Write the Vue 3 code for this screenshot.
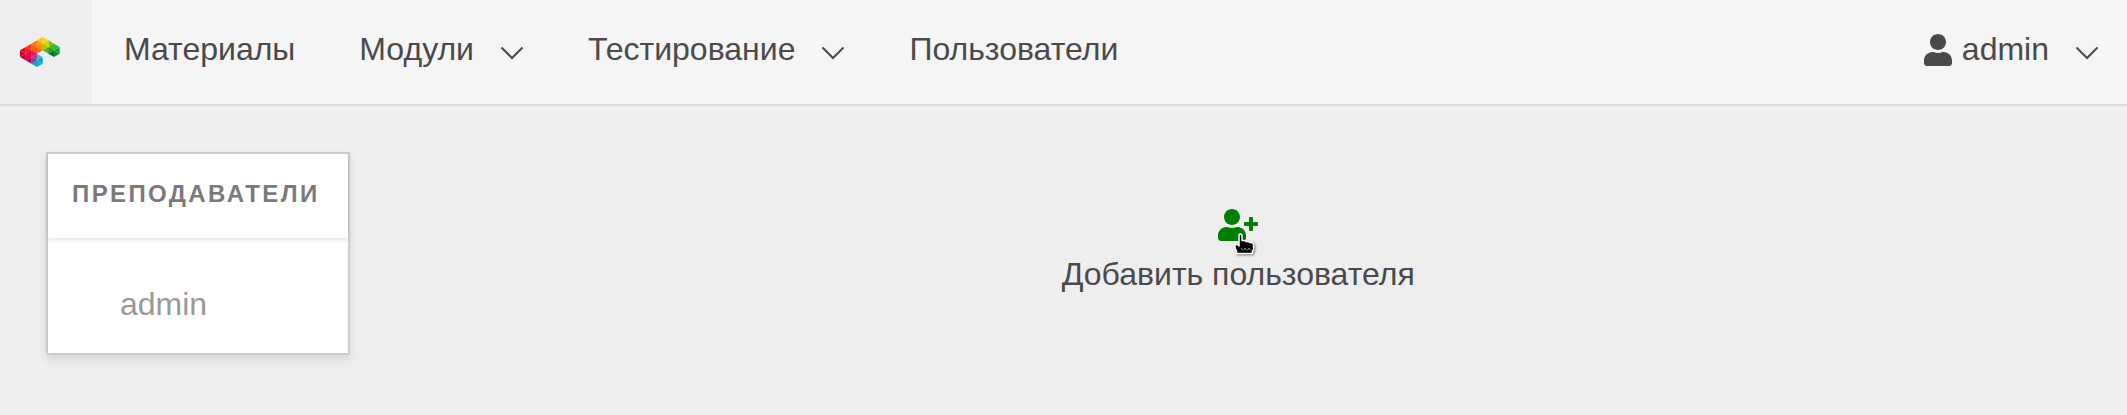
<script setup>
const navItems = [
  { title: 'Материалы', menu: false },
  { title: 'Модули', menu: true },
  { title: 'Тестирование', menu: true },
  { title: 'Пользователи', menu: false },
]

// Each cube: centre plus six facet colours, clockwise from the upper right.
const cubes = [
  { x: 51, y: 70, c: ['#35bdd6', '#00a5c4', '#00b3cf', '#0aa0c0', '#008fb4', '#4d9fc4'] },
  { x: 34, y: 60, c: ['#c33a8f', '#a43f96', '#8e3b90', '#b3005e', '#c9005f', '#e0006c'] },
  { x: 17, y: 50, c: ['#ef2a3c', '#e8005a', '#d6004f', '#b80032', '#d3001e', '#e2001a'] },
  { x: 102, y: 40, c: ['#2db52f', '#10a22f', '#0b8f35', '#00703a', '#0a7a35', '#4cb81f'] },
  { x: 34, y: 40, c: ['#f95a10', '#f4400e', '#ef0f62', '#e9004c', '#ee1c25', '#f23a16'] },
  { x: 85, y: 30, c: ['#74c400', '#3fb618', '#18a62b', '#45b71b', '#78c800', '#b3d400'] },
  { x: 51, y: 30, c: ['#fb9a00', '#f98200', '#f66a0a', '#f4500d', '#f4600c', '#f87a08'] },
  { x: 68, y: 20, c: ['#ffd800', '#d5dc00', '#a5cc00', '#fb9100', '#f99a00', '#ffc400'] },
]
const rim = [[0, -20], [17, -10], [17, 10], [0, 20], [-17, 10], [-17, -10]]
const facets = cubes.flatMap(({ x, y, c }) =>
  c.map((fill, i) => {
    const a = rim[i]
    const b = rim[(i + 1) % 6]
    return { fill, points: `${x},${y} ${x + a[0]},${y + a[1]} ${x + b[0]},${y + b[1]}` }
  }),
)
</script>

<template>
  <div class="page">
    <nav class="navbar" aria-label="Главное меню">
      <a class="brand" href="#" aria-label="На главную">
        <svg class="logo" viewBox="0 0 120 90" aria-hidden="true">
          <polygon
            v-for="(f, i) in facets"
            :key="i"
            :points="f.points"
            :fill="f.fill"
            stroke="#ffffff"
            stroke-opacity="0.15"
            stroke-width="1"
          />
        </svg>
      </a>
      <template v-for="item in navItems" :key="item.title">
        <button v-if="item.menu" type="button" class="item">
          {{ item.title }}
          <svg class="chevron" viewBox="0 0 24 14" aria-hidden="true"><path d="M1.500 1.500 12 12 22.500 1.500" /></svg>
        </button>
        <a v-else class="item" href="#">{{ item.title }}</a>
      </template>
      <button type="button" class="item account">
        <svg class="user" viewBox="0 0 448 512" aria-hidden="true">
          <path d="M224 256c70.700 0 128-57.300 128-128S294.700 0 224 0 96 57.300 96 128s57.300 128 128 128zm89.600 32h-16.700c-22.200 10.200-46.900 16-72.900 16s-50.600-5.800-72.900-16h-16.700C60.200 288 0 348.200 0 422.400V464c0 26.500 21.500 48 48 48h352c26.500 0 48-21.500 48-48v-41.600c0-74.200-60.200-134.400-134.400-134.400z" />
        </svg>
        admin
        <svg class="chevron" viewBox="0 0 24 14" aria-hidden="true"><path d="M1.500 1.500 12 12 22.500 1.500" /></svg>
      </button>
    </nav>

    <main class="content">
      <aside class="panel">
        <h2 class="panel-title">Преподаватели</h2>
        <a class="panel-link" href="#">admin</a>
      </aside>
      <section class="stage">
        <button type="button" class="add">
          <span class="add-icon">
            <svg class="user-plus" viewBox="0 0 640 512" aria-hidden="true">
              <path d="M624 208h-64v-64c0-8.800-7.200-16-16-16h-32c-8.800 0-16 7.200-16 16v64h-64c-8.800 0-16 7.200-16 16v32c0 8.800 7.200 16 16 16h64v64c0 8.800 7.200 16 16 16h32c8.800 0 16-7.200 16-16v-64h64c8.800 0 16-7.200 16-16v-32c0-8.800-7.200-16-16-16zm-400 48c70.700 0 128-57.300 128-128S294.700 0 224 0 96 57.300 96 128s57.300 128 128 128zm89.600 32h-16.700c-22.200 10.200-46.900 16-72.900 16s-50.600-5.800-72.900-16h-16.700C60.200 288 0 348.200 0 422.400V464c0 26.500 21.500 48 48 48h352c26.500 0 48-21.500 48-48v-41.600c0-74.200-60.200-134.400-134.400-134.400z" />
            </svg>
            <svg class="pointer" viewBox="0 0 21 22" aria-hidden="true">
              <path d="M5 2Q6.500 0 8 2V7.500L11 7.500 12 8.500 14.500 8.500 15.500 9.500 18 9.500 19.500 11V17L18.500 18V20.500H2.500V18L1 15V11.500H3.500L5 13Z" fill="#000" stroke="#fff" stroke-width="1.500" stroke-linejoin="round" />
              <path d="M7.500 15v1l1 1h1l1-1v-1m1 0v1l1 1h1l1-1v-1m1 0v1l1 1h1" fill="none" stroke="#aaa" stroke-width="0.700" />
            </svg>
          </span>
          <span>Добавить пользователя</span>
        </button>
      </section>
    </main>
  </div>
</template>

<style>
body {
  margin: 0;
  background: #eeeeee;
}
</style>

<style scoped>
.page {
  min-height: 100vh;
  background: #eeeeee;
  color: #4a4a4a;
  font-family: "Liberation Sans", Arial, sans-serif;
  font-size: 32px;
  line-height: 48px;
}
a {
  color: inherit;
  text-decoration: none;
}
button {
  border: 0;
  background: none;
  color: inherit;
  font: inherit;
  cursor: pointer;
}
.navbar {
  display: flex;
  background: #f5f5f5;
  border-bottom: 2px solid #dbdbdb;
}
.brand {
  display: flex;
  align-items: center;
  padding: 0 32px 0 20px;
  background: #eeeeee;
}
.logo {
  width: 40px;
  height: 30px;
}
.item {
  display: flex;
  align-items: center;
  padding: 25px 32px 31px;
  white-space: nowrap;
}
.chevron {
  width: 24px;
  height: 14px;
  margin-left: 26px;
  margin-top: 8px;
  fill: none;
  stroke: currentColor;
  stroke-width: 2;
}
.account {
  margin-left: auto;
  padding-right: 28px;
}
.user {
  width: 28px;
  height: 32px;
  margin-right: 10px;
  margin-top: 2px;
  fill: currentColor;
}
.content {
  display: flex;
  align-items: flex-start;
  padding: 46px 0 46px 46px;
}
.panel {
  border: 2px solid #cccccc;
  background: #ffffff;
  box-shadow: 0 4px 8px rgba(0, 0, 0, 0.1);
}
.panel-title {
  margin: 0;
  padding: 16px 28px 20px 24px;
  font-size: 24px;
  font-weight: 700;
  letter-spacing: 0.1em;
  text-transform: uppercase;
  color: #7a7a7a;
  box-shadow: 0 2px 4px rgba(0, 0, 0, 0.1);
}
.panel-link {
  display: block;
  padding: 42px 24px 25px 72px;
  color: #999999;
}
.stage {
  flex: 1;
  display: flex;
  justify-content: center;
  padding-top: 57px;
}
.add {
  display: flex;
  flex-direction: column;
  align-items: center;
  gap: 9px;
  padding: 0;
}
.add-icon {
  position: relative;
  display: block;
  width: 40px;
  height: 32px;
}
.user-plus {
  display: block;
  width: 40px;
  height: 32px;
  fill: #008000;
}
.pointer {
  position: absolute;
  left: 16px;
  top: 24px;
  width: 21px;
  height: 22px;
  filter: drop-shadow(1px 1px 1px rgba(0, 0, 0, 0.5));
}
</style>
